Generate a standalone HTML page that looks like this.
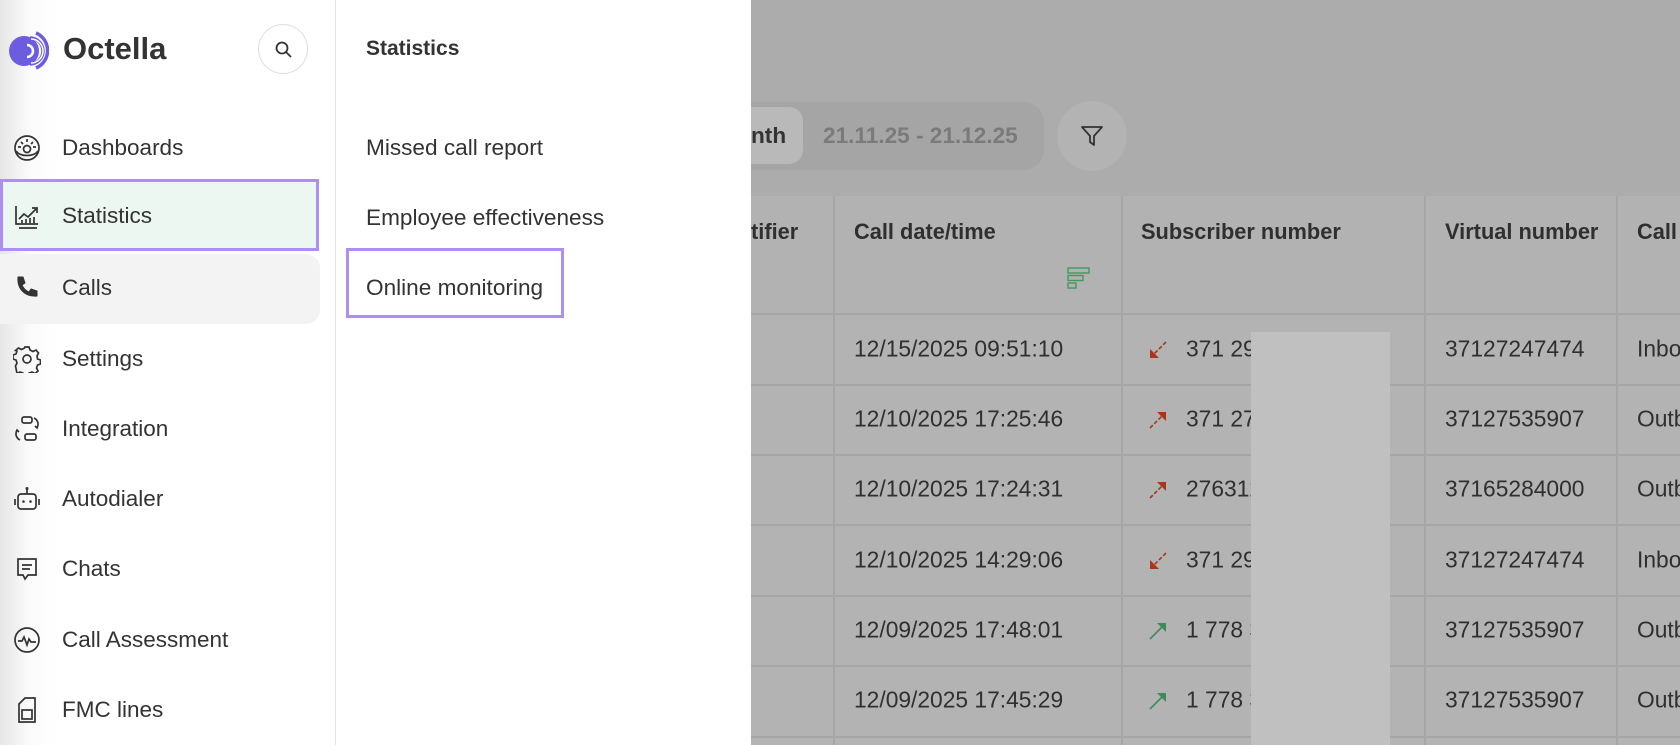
<!DOCTYPE html>
<html><head><meta charset="utf-8"><style>
*{box-sizing:border-box;margin:0;padding:0}
body{width:1680px;height:745px;overflow:hidden;position:relative;background:#acacac;font-family:"Liberation Sans",sans-serif;color:#333}
.abs{position:absolute}
.side{left:0;top:0;width:335px;height:745px;background:linear-gradient(90deg,#e6e6e6 0,#fbfbfb 30px,#fff 60px);}
.nav{position:absolute;left:62px;font-size:22.5px;color:#333;transform:translateY(-50%)}
.ic{position:absolute;left:13px;width:28px;height:28px;transform:translateY(-50%)}
.sub{left:335px;top:0;width:416px;height:745px;background:#fff;border-left:1px solid #e4e4e4}
.si{position:absolute;left:30px;font-size:22.6px;color:#333;transform:translateY(-50%)}
.th{position:absolute;top:219px;font-size:21.8px;font-weight:bold;color:#2f2f2f}
.td{position:absolute;font-size:22.8px;color:#2f2f2f;transform:translateY(-50%)}
.vl{position:absolute;top:196px;width:2px;height:549px;background:#a6a6a6}
.hl{position:absolute;left:751px;width:929px;height:2px;background:#a6a6a6}
</style></head><body>
<div class="abs" style="left:751px;top:102px;width:293px;height:68px;background:#a5a5a5;border-radius:0 20px 20px 0"></div>
<div class="abs" style="left:751px;top:107px;width:52px;height:57px;background:#b9b9b9;border-radius:0 14px 14px 0"></div>
<div class="abs" style="left:751px;top:136px;transform:translateY(-50%);font-size:22.6px;font-weight:bold;color:#333">nth</div>
<div class="abs" style="left:823px;top:136px;transform:translateY(-50%);font-size:22.6px;font-weight:bold;color:#7a7a7a">21.11.25 - 21.12.25</div>
<div class="abs" style="left:1057px;top:101px;width:70px;height:70px;border-radius:50%;background:#b3b3b3"></div>
<svg class="abs" style="left:1079px;top:123px" width="26" height="26" viewBox="0 0 26 26"><path d="M3 4h20l-8 9v9l-4-3v-6z" fill="none" stroke="#333" stroke-width="1.8" stroke-linejoin="round"/></svg>
<div class="abs" style="left:751px;top:196px;width:929px;height:118px;background:#b2b2b2"></div>
<div class="abs" style="left:751px;top:314px;width:929px;height:431px;background:#b3b3b3"></div>
<div class="vl" style="left:833px"></div><div class="vl" style="left:1121px"></div><div class="vl" style="left:1424px"></div><div class="vl" style="left:1616px"></div>
<div class="hl" style="top:313px"></div><div class="hl" style="top:384px"></div><div class="hl" style="top:454px"></div><div class="hl" style="top:524px"></div><div class="hl" style="top:595px"></div><div class="hl" style="top:665px"></div><div class="hl" style="top:736px"></div>
<div class="th" style="left:751px">tifier</div>
<div class="th" style="left:854px">Call date/time</div>
<div class="th" style="left:1141px">Subscriber number</div>
<div class="th" style="left:1445px">Virtual number</div>
<div class="th" style="left:1637px">Call</div>
<svg class="abs" style="left:1067px;top:267px" width="24" height="22"><g fill="none" stroke="#3f9a5c" stroke-width="1.4"><rect x="1" y="1" width="21" height="5"/><rect x="1" y="8.5" width="15" height="5"/><rect x="1" y="16" width="8" height="5"/></g></svg>
<div class="abs" style="left:1251px;top:332px;width:139px;height:413px;background:#c0c0c0"></div>
<div class="td" style="left:854px;top:349px">12/15/2025 09:51:10</div>
<div class="td" style="left:854px;top:419px">12/10/2025 17:25:46</div>
<div class="td" style="left:854px;top:489px">12/10/2025 17:24:31</div>
<div class="td" style="left:854px;top:560px">12/10/2025 14:29:06</div>
<div class="td" style="left:854px;top:630px">12/09/2025 17:48:01</div>
<div class="td" style="left:854px;top:700px">12/09/2025 17:45:29</div>
<div class="td" style="left:1186px;top:349px;width:65px;overflow:hidden;white-space:nowrap">371 29</div>
<div class="td" style="left:1186px;top:419px;width:65px;overflow:hidden;white-space:nowrap">371 27</div>
<div class="td" style="left:1186px;top:489px;width:65px;overflow:hidden;white-space:nowrap">276312</div>
<div class="td" style="left:1186px;top:560px;width:65px;overflow:hidden;white-space:nowrap">371 29</div>
<div class="td" style="left:1186px;top:630px;width:65px;overflow:hidden;white-space:nowrap">1 778 3</div>
<div class="td" style="left:1186px;top:700px;width:65px;overflow:hidden;white-space:nowrap">1 778 3</div>
<svg class="abs" style="left:1147px;top:339px" width="22" height="22"><path d="M19 3L4 18" stroke="#a9361a" stroke-width="1.6" stroke-dasharray="4 2"/><path d="M3 10v9h9z" fill="#a9361a"/></svg>
<svg class="abs" style="left:1147px;top:409px" width="22" height="22"><path d="M3 19L18 4" stroke="#a9361a" stroke-width="1.6" stroke-dasharray="4 2"/><path d="M10 3h9v9z" fill="#a9361a"/></svg>
<svg class="abs" style="left:1147px;top:479px" width="22" height="22"><path d="M3 19L18 4" stroke="#a9361a" stroke-width="1.6" stroke-dasharray="4 2"/><path d="M10 3h9v9z" fill="#a9361a"/></svg>
<svg class="abs" style="left:1147px;top:550px" width="22" height="22"><path d="M19 3L4 18" stroke="#a9361a" stroke-width="1.6" stroke-dasharray="4 2"/><path d="M3 10v9h9z" fill="#a9361a"/></svg>
<svg class="abs" style="left:1147px;top:620px" width="22" height="22"><path d="M3 19L18 4" stroke="#3f8a5a" stroke-width="1.6"/><path d="M10 3h9v9z" fill="#3f8a5a"/></svg>
<svg class="abs" style="left:1147px;top:690px" width="22" height="22"><path d="M3 19L18 4" stroke="#3f8a5a" stroke-width="1.6"/><path d="M10 3h9v9z" fill="#3f8a5a"/></svg>
<div class="td" style="left:1445px;top:349px">37127247474</div>
<div class="td" style="left:1445px;top:419px">37127535907</div>
<div class="td" style="left:1445px;top:489px">37165284000</div>
<div class="td" style="left:1445px;top:560px">37127247474</div>
<div class="td" style="left:1445px;top:630px">37127535907</div>
<div class="td" style="left:1445px;top:700px">37127535907</div>
<div class="td" style="left:1637px;top:349px">Inbound</div>
<div class="td" style="left:1637px;top:419px">Outbound</div>
<div class="td" style="left:1637px;top:489px">Outbound</div>
<div class="td" style="left:1637px;top:560px">Inbound</div>
<div class="td" style="left:1637px;top:630px">Outbound</div>
<div class="td" style="left:1637px;top:700px">Outbound</div>

<div class="abs side">
<svg class="abs" style="left:7px;top:29px" width="42" height="42" viewBox="0 0 42 42"><circle cx="17" cy="22" r="15" fill="#6c5ce0"/><path d="M23 9a13 13 0 0 1 0 26" fill="none" stroke="#6c5ce0" stroke-width="3.5"/><path d="M29 4a19 19 0 0 1 0 35" fill="none" stroke="#6c5ce0" stroke-width="3.5"/><path d="M20 16a6 6 0 0 1 0 12" fill="none" stroke="#fff" stroke-width="2.5"/><path d="M24 10a12 12 0 0 1 0 24" fill="none" stroke="#fff" stroke-width="1.5"/></svg>
<div class="abs" style="left:63px;top:31px;font-size:31px;font-weight:bold;color:#333">Octella</div>
<div class="abs" style="left:258px;top:24px;width:50px;height:50px;border-radius:50%;border:1.5px solid #ddd;background:#fff"></div>
<svg class="abs" style="left:274px;top:40px" width="20" height="20"><circle cx="8" cy="8" r="5.5" fill="none" stroke="#333" stroke-width="1.8"/><path d="M12 12l5 5" stroke="#333" stroke-width="1.8"/></svg>

<div class="abs" style="left:0;top:179px;width:319px;height:72px;background:#ebf7f0;border:3px solid #ad8ff2"></div>
<div class="abs" style="left:0;top:254px;width:320px;height:70px;background:#f3f3f3;border-radius:0 14px 14px 0"></div>

<svg class="ic" style="top:148px" viewBox="0 0 28 28"><g fill="none" stroke="#333" stroke-width="1.7"><circle cx="14" cy="14" r="12"/><circle cx="14" cy="15" r="3.5"/><path d="M3 17c4 6 18 6 22 0M14 5v3M8 8l2 2M20 8l-2 2M5 13h3M20 13h3"/></g></svg>
<svg class="ic" style="top:216px" viewBox="0 0 28 28"><g fill="none" stroke="#333" stroke-width="1.7"><path d="M3 4v18h22M6 26h18"/><path d="M6 17l5-5 4 3 8-8M19 6h5v5"/><path d="M9 21v-3M13 21v-4M17 21v-5M21 21v-6"/></g></svg>
<svg class="ic" style="top:288px" viewBox="0 0 28 28"><path d="M5 3l5 0 2 6-3 2c1.5 3.5 4 6 7 7l2-3 6 2v5c-12 1-20-7-19-19z" fill="#333" stroke="#333" stroke-width="1" stroke-linejoin="round"/></svg>
<svg class="ic" style="top:359px" viewBox="0 0 28 28"><g fill="none" stroke="#333" stroke-width="1.7"><circle cx="14" cy="14" r="4"/><path d="M12 2h4l1 3 3 1.5 3-1.5 2.5 3-1.5 3 .5 3 3 1v4l-3 1-1 3 1.5 3-3 2.5-3-1.5-3 1-1 3h-4l-1-3-3-1-3 1.5L2.5 21l1.5-3-1-3-3-1v-4l3-1 1-3L2.5 5.5 5.5 3l3 1.5 3-1.5z"/></g></svg>
<svg class="ic" style="top:429px" viewBox="0 0 28 28"><g fill="none" stroke="#333" stroke-width="1.7"><rect x="9" y="2" width="10" height="6" rx="2"/><rect x="12" y="19" width="11" height="6" rx="2"/><path d="M21 3c4 2 5 6 3 10l-2-2M7 25c-4-2-5-6-3-10l2 2"/></g></svg>
<svg class="ic" style="top:499px" viewBox="0 0 28 28"><g fill="none" stroke="#333" stroke-width="1.7"><rect x="5" y="9" width="18" height="15" rx="3"/><path d="M14 4v5M2 14v6M26 14v6"/></g><circle cx="14" cy="3.5" r="1.5" fill="#333"/><circle cx="10.5" cy="16.5" r="1.3" fill="#333"/><circle cx="17.5" cy="16.5" r="1.3" fill="#333"/></svg>
<svg class="ic" style="top:569px" viewBox="0 0 28 28"><g fill="none" stroke="#333" stroke-width="1.7"><path d="M5 4h18v16h-8l-3 4-2-4H5z"/><path d="M9 10h10M9 14h8"/></g></svg>
<svg class="ic" style="top:640px" viewBox="0 0 28 28"><g fill="none" stroke="#333" stroke-width="1.7"><circle cx="14" cy="14" r="12"/><path d="M5 15h4l2-4 3 8 2-6 2 3h5"/></g></svg>
<svg class="ic" style="top:710px" viewBox="0 0 28 28"><g fill="none" stroke="#333" stroke-width="1.7"><path d="M12 2h10v24H6V8z"/><rect x="9" y="14" width="10" height="9"/></g></svg>

<div class="nav" style="top:148px">Dashboards</div>
<div class="nav" style="top:216px">Statistics</div>
<div class="nav" style="top:288px">Calls</div>
<div class="nav" style="top:359px">Settings</div>
<div class="nav" style="top:429px">Integration</div>
<div class="nav" style="top:499px">Autodialer</div>
<div class="nav" style="top:569px">Chats</div>
<div class="nav" style="top:640px">Call Assessment</div>
<div class="nav" style="top:710px">FMC lines</div>
</div>

<div class="abs sub">
<div class="si" style="top:49px;font-size:21px;font-weight:bold">Statistics</div>
<div class="si" style="top:148px">Missed call report</div>
<div class="si" style="top:218px">Employee effectiveness</div>
<div class="abs" style="left:10px;top:248px;width:218px;height:70px;border:3px solid #ad8ff2"></div>
<div class="si" style="top:288px">Online monitoring</div>
</div>
</body></html>
